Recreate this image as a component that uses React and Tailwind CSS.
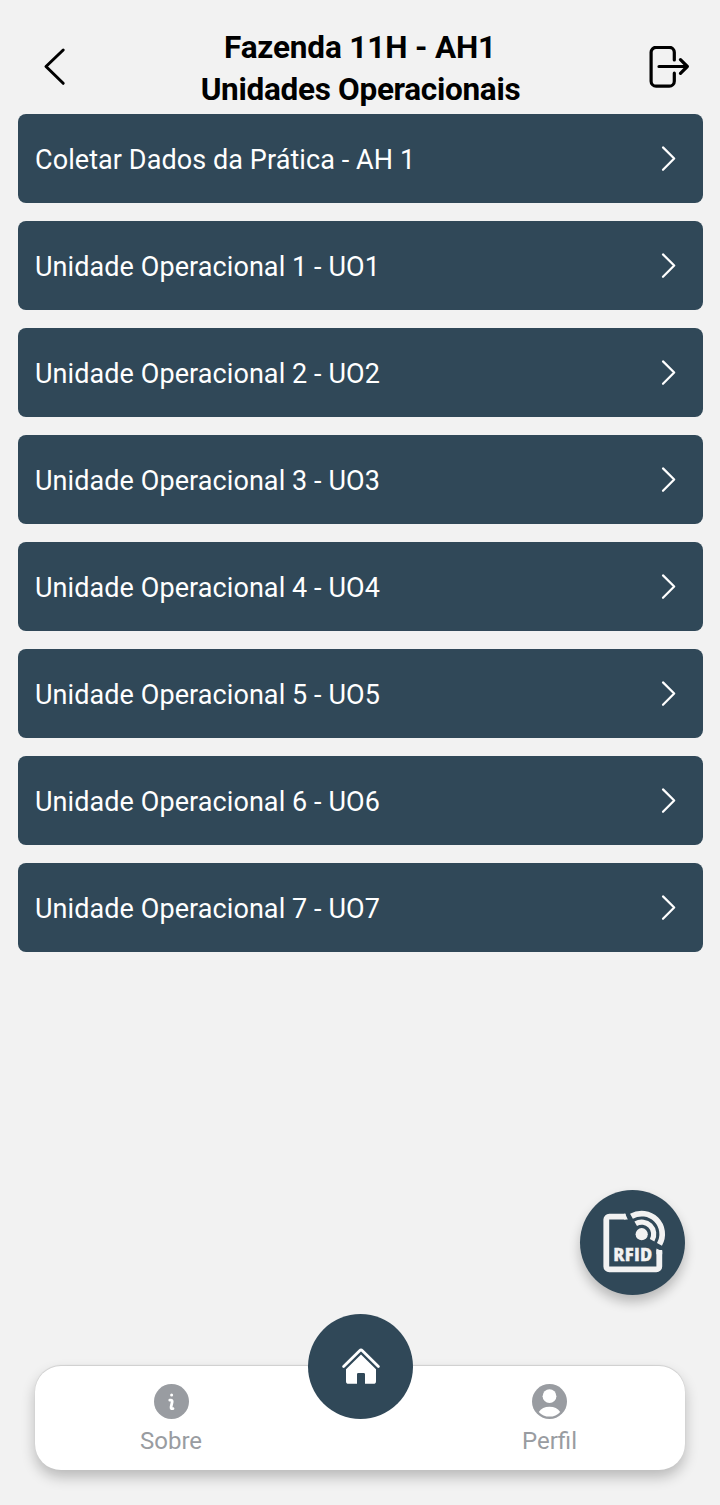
const units = [
  "Coletar Dados da Prática - AH 1",
  "Unidade Operacional 1 - UO1",
  "Unidade Operacional 2 - UO2",
  "Unidade Operacional 3 - UO3",
  "Unidade Operacional 4 - UO4",
  "Unidade Operacional 5 - UO5",
  "Unidade Operacional 6 - UO6",
  "Unidade Operacional 7 - UO7",
];

function BackIcon() {
  return (
    <svg className="h-[42px] w-[42px]" viewBox="0 0 42 42" fill="none" stroke="currentColor" strokeWidth="3" strokeLinecap="round" strokeLinejoin="round">
      <path d="M29.2 4 12 20.5l17.2 16.8" />
    </svg>
  );
}

function ExitIcon() {
  return (
    <svg className="h-[42px] w-[42px]" viewBox="0 0 42 42" fill="none" stroke="currentColor" strokeWidth="3" strokeLinecap="round" strokeLinejoin="round">
      <path strokeWidth="3.2" d="M27.3 14V6.3a5 5 0 0 0-5-5H9.1a5 5 0 0 0-5 5v28.9a5 5 0 0 0 5 5h13.2a5 5 0 0 0 5-5V27.2" />
      <path strokeWidth="3.2" d="M12 20.5h28M33.5 13.7l6.800 6.800-6.800 6.800" />
    </svg>
  );
}

function ChevronIcon() {
  return (
    <svg className="h-[28px] w-[16px]" viewBox="0 0 16 28" fill="none" stroke="currentColor" strokeWidth="2.2" strokeLinecap="round" strokeLinejoin="round">
      <path d="M3 2.400 14.200 13.500 3 24.800" />
    </svg>
  );
}

function RfidIcon() {
  return (
    <svg className="h-[105px] w-[105px]" viewBox="0 0 105 105" fill="none" stroke="#f2f2f2">
      <path strokeWidth="5.8" d="M45.6 26.6H29.3a3 3 0 0 0-3 3v46.8a3 3 0 0 0 3 3h47a3 3 0 0 0 3-3V60" />
      <path fill="#f2f2f2" stroke="none" d="M44 23.7h1.2l2.6 5.8H44zM76.4 58.6l5.8 2.6v3h-5.8z" />
      <circle cx="61.7" cy="44.2" r="6.1" fill="#f2f2f2" stroke="none" />
      <path strokeWidth="5.2" d="M55.7 33.8a12 12 0 0 1 16.4 16.4" />
      <path strokeWidth="5.7" d="M51.45 26.3a20.5 20.5 0 0 1 28 28" />
      <text x="33.2" y="70.6" textLength="39.4" lengthAdjust="spacingAndGlyphs" fill="#f2f2f2" strokeWidth="0.3" className="font-['Open_Sans',sans-serif] text-[17.2px] font-extrabold tracking-[0.3px]">RFID</text>
    </svg>
  );
}

function HomeIcon() {
  return (
    <svg className="h-[105px] w-[105px]" viewBox="0 0 105 105">
      <path d="M35.6 52.6 51.6 36.7a2 2 0 0 1 2.8 0l16 15.9" fill="none" stroke="#fff" strokeWidth="2.8" strokeLinecap="round" />
      <path d="M53 40.4 68 55.2v12a2.6 2.6 0 0 1-2.6 2.6H57V60.2a1.3 1.3 0 0 0-1.3-1.3h-5.4a1.3 1.3 0 0 0-1.3 1.3v9.6h-8.4a2.6 2.6 0 0 1-2.6-2.6v-12z" fill="#fff" />
    </svg>
  );
}

function InfoIcon() {
  return (
    <svg className="h-[35px] w-[35px]" viewBox="0 0 35 35">
      <circle cx="17.5" cy="17.5" r="17.5" fill="currentColor" />
      <circle cx="17.6" cy="11" r="1.5" fill="#fff" />
      <path d="M15.8 16.2h1c1.2 0 1.6.8 1.3 2l-1 4.6c-.3 1.5.3 2.2 1.9 1.8" fill="none" stroke="#fff" strokeWidth="2.8" strokeLinecap="round" strokeLinejoin="round" />
    </svg>
  );
}

function ProfileIcon() {
  return (
    <svg className="h-[35px] w-[35px]" viewBox="0 0 35 35">
      <circle cx="17.5" cy="17.5" r="17.5" fill="currentColor" />
      <circle cx="17.5" cy="12.2" r="6.9" fill="#fff" />
      <path d="M6.8 27.9C8.9 24.6 12.8 22.8 17.5 22.8s8.6 1.8 10.7 5.1C25.5 31 21.8 32.6 17.5 32.6S9.5 31 6.8 27.9z" fill="#fff" />
    </svg>
  );
}

export default function App() {
  return (
    <div className="flex h-[1505px] w-[720px] flex-col bg-[#f2f2f2] font-[Roboto,sans-serif]">
      <header className="flex h-[114px] items-start justify-between pr-[31px] pl-[34px] text-black">
        <button className="mt-[46px]"><BackIcon /></button>
        <h1 className="mt-[27px] pr-[2px] text-center text-[31.5px] leading-[42px] font-bold">
          <span className="block pr-px tracking-[-0.15px]">Fazenda 11H - AH1</span>
          <span className="block tracking-[-0.3px]">Unidades Operacionais</span>
        </h1>
        <button className="mt-[46px]"><ExitIcon /></button>
      </header>

      <main className="flex flex-col gap-[18px] pr-[17px] pl-[18px]">
        {units.map((name) => (
          <button key={name} className="flex h-[89px] items-center justify-between rounded-[8px] bg-[#304858] pr-[27px] pl-[17px] text-white">
            <span className="mt-[3px] text-[27px] leading-[38px] tracking-[0.08px]">{name}</span>
            <ChevronIcon />
          </button>
        ))}
      </main>

      <div className="mt-auto flex justify-end pr-[35px]">
        <button className="h-[105px] w-[105px] rounded-full bg-[#304858] shadow-[0_7px_12px_rgba(0,0,0,0.24)]">
          <RfidIcon />
        </button>
      </div>

      <nav className="mx-[35px] mt-[71px] mb-[35px] grid h-[104px] shrink-0 grid-cols-[272px_106px_272px] rounded-[26px] bg-white text-[#999ca1] shadow-[0_-1px_1px_rgba(0,0,0,0.12),0_7px_14px_rgba(0,0,0,0.24)]">
        <a className="flex flex-col items-center pt-[18px]">
          <InfoIcon />
          <span className="mt-[6px] text-[24px] leading-[32px]">Sobre</span>
        </a>
        <a className="-mt-[52px] ml-px h-[105px] w-[105px] rounded-full bg-[#304858]"><HomeIcon /></a>
        <a className="flex flex-col items-center pt-[18px] pl-px">
          <ProfileIcon />
          <span className="mt-[6px] text-[24px] leading-[32px]">Perfil</span>
        </a>
      </nav>
    </div>
  );
}
